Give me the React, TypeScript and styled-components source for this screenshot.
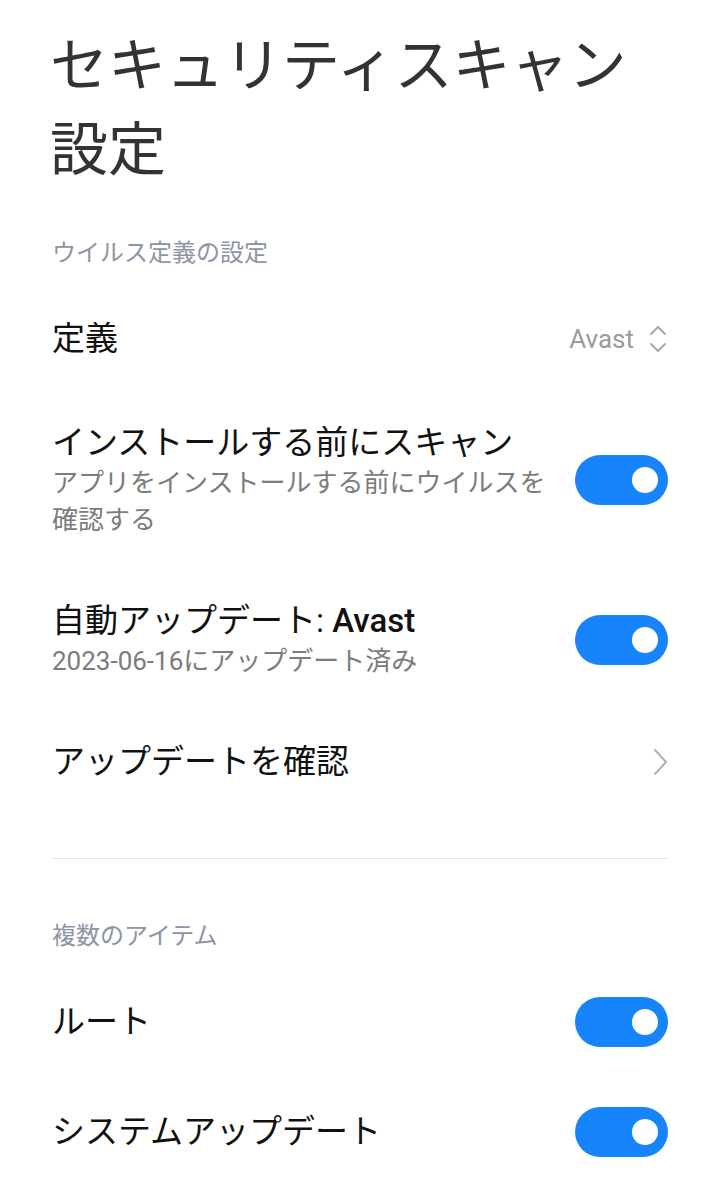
import styled, { createGlobalStyle } from "styled-components";

const GlobalStyle = createGlobalStyle`
  body {
    margin: 0;
    background: #ffffff;
    font-family: Roboto, "Noto Sans CJK JP", sans-serif;
  }
`;

const Page = styled.div`
  padding: 24px 52px 0;
  box-sizing: border-box;
  width: 720px;
  min-height: 1182px;
  background: #ffffff;
`;

const Title = styled.h1`
  margin: 0 0 0 -2px;
  font-size: 58px;
  line-height: 84px;
  font-weight: 400;
  color: #333333;
`;

const SectionHeader = styled.div<{ $top: number; $bottom: number }>`
  margin-top: ${(p) => p.$top}px;
  padding-bottom: ${(p) => p.$bottom}px;
  font-size: 24px;
  line-height: 30px;
  color: #8e93a6;
`;

const Row = styled.div`
  display: flex;
  align-items: center;
  justify-content: space-between;
  gap: 20px;
  padding: 30px 0;
`;

const RowText = styled.div`
  flex: 1;
  min-width: 0;
`;

const RowTitle = styled.div`
  font-size: 33px;
  line-height: 44px;
  color: #111111;
`;

const Strong = styled.span`
  font-weight: 500;
`;

const RowSub = styled.div`
  font-size: 26px;
  line-height: 37px;
  color: #7c7c7c;
`;

const Value = styled.div`
  display: flex;
  align-items: center;
  gap: 14px;
  font-size: 26px;
  color: #9b9b9b;
`;

const Toggle = styled.div<{ $on: boolean }>`
  flex-shrink: 0;
  width: 93px;
  height: 50px;
  border-radius: 25px;
  background: ${(p) => (p.$on ? "#1684fa" : "#d6d6d6")};
  display: flex;
  align-items: center;
  justify-content: ${(p) => (p.$on ? "flex-end" : "flex-start")};
  padding: 0 10px;
  box-sizing: border-box;
`;

const Knob = styled.div`
  width: 26px;
  height: 26px;
  border-radius: 50%;
  background: #ffffff;
`;

const Divider = styled.div`
  height: 1px;
  background: #e9e9e9;
  margin: 44px 0 0;
`;

const UpDown = () => (
  <svg width="20" height="32" viewBox="0 0 20 32" fill="none">
    <path d="M3 11 L10 4 L17 11" stroke="#a8a8a8" strokeWidth="2" strokeLinecap="round" strokeLinejoin="round" />
    <path d="M3 21 L10 28 L17 21" stroke="#a8a8a8" strokeWidth="2" strokeLinecap="round" strokeLinejoin="round" />
  </svg>
);

const ChevronRight = () => (
  <svg width="16" height="28" viewBox="0 0 16 28" fill="none">
    <path d="M3 2 L14 14 L3 26" stroke="#b0b0b0" strokeWidth="2" strokeLinecap="round" strokeLinejoin="round" />
  </svg>
);

const Switch = ({ on }: { on: boolean }) => (
  <Toggle $on={on}>
    <Knob />
  </Toggle>
);

const App = () => {
  return (
    <>
      <GlobalStyle />
      <Page>
        <Title>セキュリティスキャン設定</Title>

        <SectionHeader $top={46} $bottom={19}>
          ウイルス定義の設定
        </SectionHeader>
        <Row>
          <RowText>
            <RowTitle>定義</RowTitle>
          </RowText>
          <Value>
            Avast
            <UpDown />
          </Value>
        </Row>
        <Row>
          <RowText>
            <RowTitle>インストールする前にスキャン</RowTitle>
            <RowSub>アプリをインストールする前にウイルスを確認する</RowSub>
          </RowText>
          <Switch on />
        </Row>
        <Row>
          <RowText>
            <RowTitle>
              自動アップデート: <Strong>Avast</Strong>
            </RowTitle>
            <RowSub>2023-06-16にアップデート済み</RowSub>
          </RowText>
          <Switch on />
        </Row>
        <Row>
          <RowText>
            <RowTitle>アップデートを確認</RowTitle>
          </RowText>
          <ChevronRight />
        </Row>

        <Divider />

        <SectionHeader $top={62} $bottom={16}>
          複数のアイテム
        </SectionHeader>
        <Row>
          <RowText>
            <RowTitle>ルート</RowTitle>
          </RowText>
          <Switch on />
        </Row>
        <Row>
          <RowText>
            <RowTitle>システムアップデート</RowTitle>
          </RowText>
          <Switch on />
        </Row>
      </Page>
    </>
  );
};

export default App;
